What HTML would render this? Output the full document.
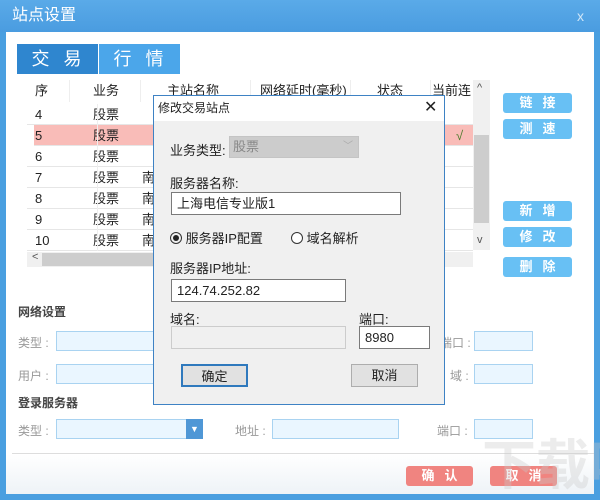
<!DOCTYPE html>
<html><head><meta charset="utf-8"><style>
*{box-sizing:border-box;margin:0;padding:0}
html{width:600px;height:500px;overflow:hidden}
body{width:600px;height:500px;overflow:hidden;font-family:"Liberation Sans","Noto Sans CJK SC",sans-serif;font-size:13px;color:#222;background:#4a9fe0;position:relative}
.a{position:absolute}
.win{left:6px;top:32px;width:588px;height:462px;background:#fff}
.title{left:0;top:0;width:600px;height:32px;background:linear-gradient(#5aaae8,#4a9ce0);color:#fff;font-size:16px;line-height:32px;padding-left:12px}
.tab{top:44px;height:30px;width:81px;color:#fff;font-size:18px;line-height:30px;text-align:center;letter-spacing:14px;padding-left:12px}
.row{left:27px;width:446px;height:21px;border-bottom:1px solid #e6e6e6;line-height:21px}
.row span{position:absolute}
.btn{left:503px;width:69px;height:20px;background:#68c0f4;border-radius:3px;color:#fff;font-weight:bold;text-align:center;line-height:20px;letter-spacing:10px;padding-left:10px;font-size:13px}
.lab{color:#999;font-size:12px}
.inp{background:#eaf6ff;border:1px solid #a9d3f1;height:20px}
.dlg{left:153px;top:95px;width:292px;height:310px;background:#f0f0f0;border:1px solid #3e82c4}
.tb{border:1px solid #7a7a7a;background:#fff;height:23px;line-height:21px;padding-left:5px}
.db{height:23px;border:1px solid #adadad;background:#e1e1e1;text-align:center;line-height:21px}
</style></head><body>
<div class="a title">站点设置<span class="a" style="right:16px;top:0;font-size:14px;color:#cfe6f8">x</span></div>
<div class="a win"></div>
<div class="a tab" style="left:17px;background:#2f86cf">交易</div>
<div class="a tab" style="left:99px;background:#4ba6ea">行情</div>
<div class="a" style="left:27px;top:80px;width:446px;height:24px;line-height:22px;">
<span class="a" style="left:8px">序</span><span class="a" style="left:66px">业务</span><span class="a" style="left:140px">主站名称</span><span class="a" style="left:233px">网络延时(毫秒)</span><span class="a" style="left:350px">状态</span><span class="a" style="left:405px">当前连</span>
<div class="a" style="left:42px;top:0;width:1px;height:22px;background:#eee"></div>
<div class="a" style="left:113px;top:0;width:1px;height:22px;background:#eee"></div>
<div class="a" style="left:223px;top:0;width:1px;height:22px;background:#eee"></div>
<div class="a" style="left:323px;top:0;width:1px;height:22px;background:#eee"></div>
<div class="a" style="left:403px;top:0;width:1px;height:22px;background:#eee"></div>
</div>
<div class="a row" style="top:104px"><span style="left:8px">4</span><span style="left:66px">股票</span></div>
<div class="a row" style="top:125px;background:#f9bcb8;left:34px;width:439px"><span style="left:1px">5</span><span style="left:59px">股票</span><span style="left:422px;color:#4a7a2a">√</span></div>
<div class="a row" style="top:146px"><span style="left:8px">6</span><span style="left:66px">股票</span></div>
<div class="a row" style="top:167px"><span style="left:8px">7</span><span style="left:66px">股票</span><span style="left:115px">南</span></div>
<div class="a row" style="top:188px"><span style="left:8px">8</span><span style="left:66px">股票</span><span style="left:115px">南</span></div>
<div class="a row" style="top:209px"><span style="left:8px">9</span><span style="left:66px">股票</span><span style="left:115px">南</span></div>
<div class="a row" style="top:230px"><span style="left:8px">10</span><span style="left:66px">股票</span><span style="left:115px">南</span></div>
<div class="a" style="left:97px;top:104px;width:1px;height:147px;background:#eee"></div>
<div class="a" style="left:473px;top:80px;width:17px;height:170px;background:#f0f0f0"></div>
<div class="a" style="left:474px;top:135px;width:15px;height:88px;background:#cdcdcd"></div>
<div class="a" style="left:477px;top:82px;font-size:11px;color:#555">^</div>
<div class="a" style="left:477px;top:234px;font-size:11px;color:#555">v</div>
<div class="a" style="left:27px;top:252px;width:446px;height:15px;background:#f0f0f0"></div>
<div class="a" style="left:42px;top:253px;width:400px;height:13px;background:#cdcdcd"></div>
<div class="a" style="left:32px;top:251px;font-size:11px;color:#555">&lt;</div>
<div class="a btn" style="top:93px">链接</div>
<div class="a btn" style="top:119px">测速</div>
<div class="a btn" style="top:201px">新增</div>
<div class="a btn" style="top:227px">修改</div>
<div class="a btn" style="top:257px">删除</div>
<div class="a" style="left:18px;top:303px;font-weight:bold;font-size:12px;color:#444">网络设置</div>
<div class="a lab" style="left:18px;top:334px">类型 :</div>
<div class="a inp" style="left:56px;top:331px;width:120px"></div>
<div class="a lab" style="left:18px;top:367px">用户 :</div>
<div class="a inp" style="left:56px;top:364px;width:120px"></div>
<div class="a lab" style="left:440px;top:334px">端口 :</div>
<div class="a inp" style="left:474px;top:331px;width:59px"></div>
<div class="a lab" style="left:450px;top:367px">域 :</div>
<div class="a inp" style="left:474px;top:364px;width:59px"></div>
<div class="a" style="left:18px;top:394px;font-weight:bold;font-size:12px;color:#444">登录服务器</div>
<div class="a lab" style="left:18px;top:422px">类型 :</div>
<div class="a inp" style="left:56px;top:419px;width:147px"></div>
<div class="a" style="left:186px;top:419px;width:17px;height:20px;background:#4f97d6;color:#fff;font-size:9px;text-align:center;line-height:20px">▼</div>
<div class="a lab" style="left:235px;top:422px">地址 :</div>
<div class="a inp" style="left:272px;top:419px;width:127px"></div>
<div class="a lab" style="left:437px;top:422px">端口 :</div>
<div class="a inp" style="left:474px;top:419px;width:59px"></div>
<div class="a" style="left:12px;top:453px;width:582px;height:1px;background:#ddd"></div>
<div class="a" style="left:6px;top:454px;width:588px;height:40px;background:linear-gradient(#fff,#eef3f7)"></div>
<div class="a btn" style="left:406px;top:466px;width:67px;background:#f08480">确认</div>
<div class="a btn" style="left:490px;top:466px;width:67px;background:#f08480">取消</div>
<div class="a" style="left:482px;top:436px;font-size:54px;line-height:60px;white-space:nowrap;color:rgba(200,200,200,.35);font-weight:bold">下载吧</div>

<div class="a dlg">
<div class="a" style="left:0;top:0;width:290px;height:25px;background:#fff;line-height:24px;padding-left:4px;font-size:12px">修改交易站点<span class="a" style="left:270px;top:0;font-size:16px">✕</span></div>
<div class="a" style="left:16px;top:44px">业务类型:</div>
<div class="a" style="left:75px;top:40px;width:130px;height:22px;background:#ccc;border:1px solid #c4c4c4;color:#888;line-height:20px;padding-left:3px">股票<span class="a" style="right:5px;top:0;color:#aaa;font-size:10px">﹀</span></div>
<div class="a" style="left:16px;top:77px">服务器名称:</div>
<div class="a tb" style="left:17px;top:96px;width:230px">上海电信专业版1</div>
<div class="a" style="left:16px;top:132px"><span style="display:inline-block;width:12px;height:12px;border:1px solid #333;border-radius:50%;vertical-align:-1px;position:relative"><span class="a" style="left:2px;top:2px;width:6px;height:6px;border-radius:50%;background:#222"></span></span> 服务器IP配置</div>
<div class="a" style="left:137px;top:132px"><span style="display:inline-block;width:12px;height:12px;border:1px solid #333;border-radius:50%;vertical-align:-1px;background:#fff"></span> 域名解析</div>
<div class="a" style="left:16px;top:162px">服务器IP地址:</div>
<div class="a tb" style="left:17px;top:183px;width:175px">124.74.252.82</div>
<div class="a" style="left:16px;top:213px">域名:</div>
<div class="a" style="left:17px;top:230px;width:175px;height:23px;border:1px solid #ccc;background:#f0f0f0"></div>
<div class="a" style="left:205px;top:213px">端口:</div>
<div class="a tb" style="left:205px;top:230px;width:71px">8980</div>
<div class="a db" style="left:27px;top:268px;width:67px;border:2px solid #2f79bd">确定</div>
<div class="a db" style="left:197px;top:268px;width:67px">取消</div>
</div>
</body></html>
